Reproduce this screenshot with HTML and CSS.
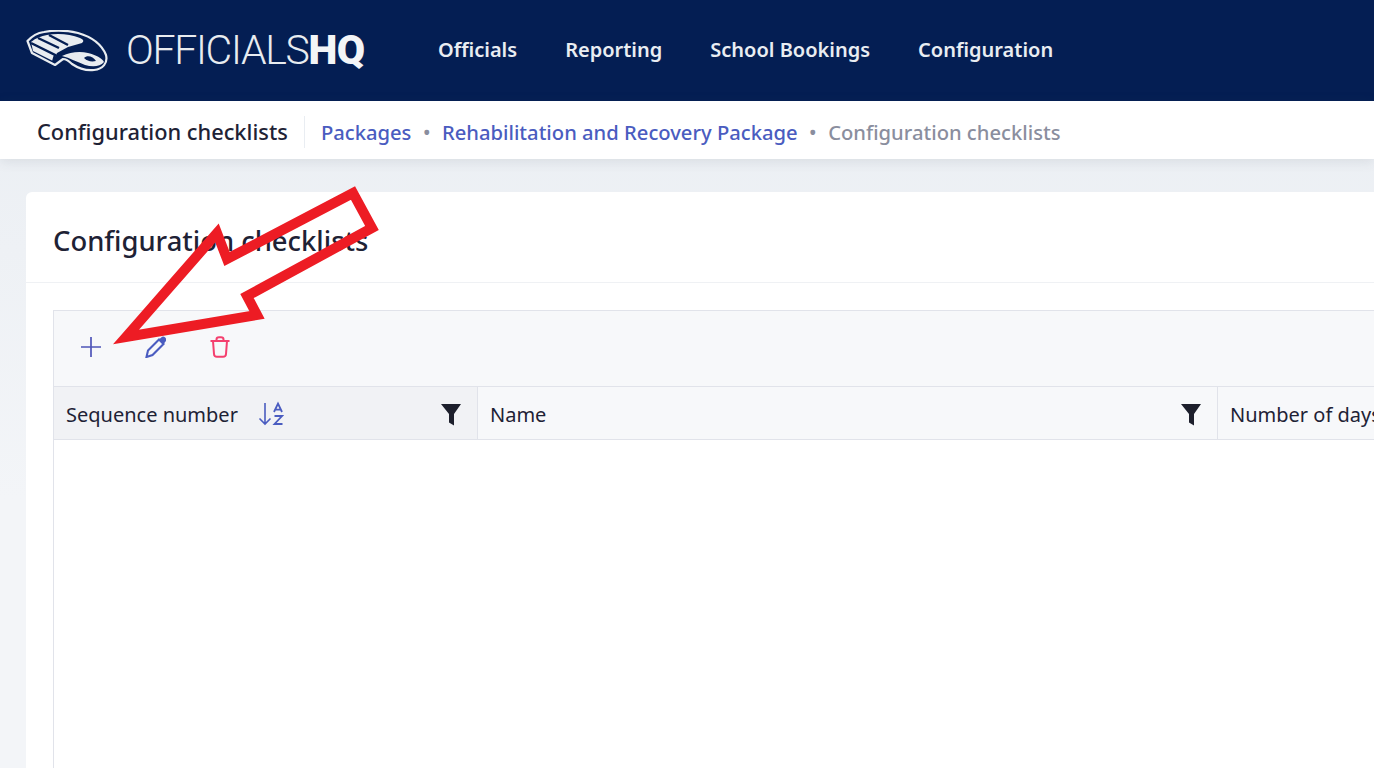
FILE: index.html
```html
<!DOCTYPE html>
<html lang="en">
<head>
    <meta charset="UTF-8">
    <title>Configuration checklists</title>
    <link rel="stylesheet" href="styles.css">
</head>
<body>
    <header class="topbar">
        <a class="brand" href="#">
            <svg class="brand-mark" width="82" height="42" viewBox="0 0 82 42">
                <path d="M1.5 11 C6 6 11 3 18 2 C28 0 40 0 52 3 C66 7 76 15 80 25 C82 33 77 39 68 40 C60 41 52 38 46 34 C43 31 40 29 37 29 L29 35 L6 23 Z" fill="none" stroke="#e8ecf0" stroke-width="2.2" stroke-linejoin="round"/>
                <path d="M5 12 C10 8 15 6 21 5 C32 3 44 4 54 8 C58 10 58 11 56 13 L42 17 L31 23 L27 31 L7 21 Z" fill="#e8ecf0"/>
                <path d="M12 8 L33 18 M23 5 L42 15 M5 13 L29 25 L27 32" stroke="#041e53" stroke-width="2.4" fill="none"/>
                <path d="M36 26 C44 22 54 21 62 23 C70 25 76 28 78 32 C74 37 66 37 59 35 C51 32 44 28 36 26 Z" fill="#e8ecf0"/>
                <path d="M58 28 C61 25 67 26 70 31 C65 32 61 31 58 28 Z" fill="#041e53"/>
            </svg>
            <span class="brand-name">OFFICIALS<b>HQ</b></span>
        </a>
        <nav class="mainnav">
            <a href="#">Officials</a>
            <a href="#">Reporting</a>
            <a href="#">School Bookings</a>
            <a href="#">Configuration</a>
        </nav>
    </header>

    <div class="subbar">
        <h2 class="subbar-title">Configuration checklists</h2>
        <ul class="crumbs">
            <li><a href="#">Packages</a></li>
            <li><a href="#">Rehabilitation and Recovery Package</a></li>
            <li class="current">Configuration checklists</li>
        </ul>
    </div>

    <main class="content">
        <section class="card">
            <h3 class="card-title">Configuration checklists</h3>
            <div class="card-body">
                <div class="grid">
                    <div class="toolbar">
                        <button class="tool">
                            <svg width="22" height="22" viewBox="0 0 22 22"><path d="M11 1 V21 M1 11 H21" stroke="#4f55b8" stroke-width="1.7" fill="none"/></svg>
                        </button>
                        <button class="tool">
                            <svg width="22" height="22" viewBox="-1 0 22 22"><path d="M1.5 21 L3 14.5 L14 3.5 L18.5 8 L7.5 19 Z" fill="none" stroke="#4a5cc0" stroke-width="2.1"/><path d="M14 3.5 L16.5 1.2 C17.5 .3 19 .4 20.2 1.6 C21.4 2.8 21.6 4.2 20.6 5.4 L18.5 8 Z" fill="#4a5cc0"/></svg>
                        </button>
                        <button class="tool">
                            <svg width="22" height="22" viewBox="-1 0 22 22"><path d="M1.5 5 H20.5 M7.5 5 V3.5 C7.5 2 8.5 1.2 10 1.2 H12 C13.5 1.2 14.5 2 14.5 3.5 V5 M4 5 L5 18 C5.1 19.8 6.2 20.8 8 20.8 H14 C15.8 20.8 16.9 19.8 17 18 L18 5" fill="none" stroke="#f43f6e" stroke-width="2"/></svg>
                        </button>
                    </div>
                    <div class="thead">
                        <div class="th th-sorted">
                            <span>Sequence number</span>
                            <svg class="sort-icon" width="26" height="26" viewBox="0 0 26 26"><path d="M7 2 V23 M1.5 17.5 L7 23 L12.5 17.5" fill="none" stroke="#4a5cc0" stroke-width="1.6"/><path d="M16 11 L20 2.5 L24 11 M17 8.7 H23 M16.5 15 H24 L16.5 23 H24.5" fill="none" stroke="#4a5cc0" stroke-width="1.8"/></svg>
                            <svg class="filter-icon" width="22" height="23" viewBox="0 0 22 23"><path d="M1 1 H21 L14 11 V22.5 L9 19.5 V11 Z" fill="#1d1f2c"/></svg>
                        </div>
                        <div class="th th-name">
                            <span>Name</span>
                            <svg class="filter-icon" width="22" height="23" viewBox="0 0 22 23"><path d="M1 1 H21 L14 11 V22.5 L9 19.5 V11 Z" fill="#1d1f2c"/></svg>
                        </div>
                        <div class="th th-days">
                            <span>Number of days</span>
                        </div>
                    </div>
                    <div class="tbody"></div>
                </div>
            </div>
        </section>
    </main>

    <!-- annotation drawn over the screenshot -->
    <svg class="arrow" width="280" height="170" viewBox="0 0 280 170">
        <path d="M16 156 L107 52 L117 78 L243 12 L262 47 L137 115 L147 134 Z" fill="none" stroke="#ed1c24" stroke-width="10" stroke-miterlimit="8"/>
    </svg>
</body>
</html>
```

FILE: styles.css
```css
* {
    box-sizing: border-box;
}
html, body {
    height: 100%;
}
body {
    margin: 0;
    overflow: hidden;
    font-family: "Noto Sans", "Open Sans", sans-serif;
    color: #1e2235;
    background: linear-gradient(#e9edf2, #f3f5f8 500px);
}
a {
    text-decoration: none;
}

.topbar {
    height: 101px;
    background: #041e53;
    display: flex;
    align-items: center;
    padding-left: 26px;
}
.brand {
    display: flex;
    align-items: center;
    gap: 18px;
    width: 412px;
}
.brand-mark {
    flex: none;
}
.brand-name {
    font-family: Roboto, sans-serif;
    font-weight: 300;
    font-size: 41px;
    letter-spacing: -1.3px;
    color: #e8ecf0;
    padding-bottom: 2px;
}
.brand-name b {
    font-weight: 900;
    letter-spacing: -.7px;
    color: #f3f5f7;
}
.mainnav {
    display: flex;
    gap: 48px;
    padding-bottom: 2px;
}
.mainnav a {
    color: #e9edf2;
    font-size: 20px;
    font-weight: 600;
}

.subbar {
    height: 58px;
    background: #fff;
    display: flex;
    align-items: center;
    padding: 4px 0 0 37px;
    box-shadow: 0 2px 12px rgba(60, 70, 90, .12);
    position: relative;
}
.subbar-title {
    margin: 0;
    font-size: 21.8px;
    font-weight: 500;
    padding-right: 16px;
    border-right: 1px solid #e9edf2;
    line-height: 32px;
}
.crumbs {
    list-style: none;
    display: flex;
    align-items: center;
    margin: 0;
    padding: 0 0 0 16px;
    font-size: 20.2px;
    font-weight: 500;
}
.crumbs li + li::before {
    content: "•";
    color: #8a8e9e;
    font-size: 20px;
    margin: 0 11.5px;
}
.crumbs a {
    color: #4a5cc0;
}
.crumbs .current {
    color: #8a8e9e;
}

.content {
    padding: 33px 0 0 26px;
}
.card {
    width: 1500px;
    height: 800px;
    background: #fff;
    border-radius: 6px;
}
.card-title {
    margin: 0;
    height: 91px;
    padding-left: 27px;
    line-height: 97px;
    font-size: 27.4px;
    font-weight: 500;
    border-bottom: 1px solid #eff1f4;
}
.card-body {
    padding: 27px;
}
.grid {
    border: 1px solid #e1e3ea;
    height: 700px;
}
.toolbar {
    height: 76px;
    background: #f7f8fa;
    display: flex;
    align-items: center;
    gap: 42px;
    padding: 0 0 4px 26px;
    border-bottom: 1px solid #e1e3ea;
}
.tool {
    border: 0;
    padding: 0;
    background: none;
    display: flex;
}
.thead {
    height: 53px;
    display: flex;
    background: #f7f8fa;
    border-bottom: 1px solid #e1e3ea;
    font-size: 20px;
}
.th {
    display: flex;
    align-items: center;
    padding: 2px 12px 0;
    border-right: 1px solid #e1e3ea;
}
.th-sorted {
    width: 424px;
    background: #f1f2f5;
}
.th-name {
    width: 740px;
}
.th-days {
    flex: 1;
    border-right: 0;
}
.sort-icon {
    margin-left: 20px;
}
.filter-icon {
    margin-left: auto;
    margin-right: 3px;
}

.arrow {
    position: absolute;
    left: 110px;
    top: 181px;
}
```
